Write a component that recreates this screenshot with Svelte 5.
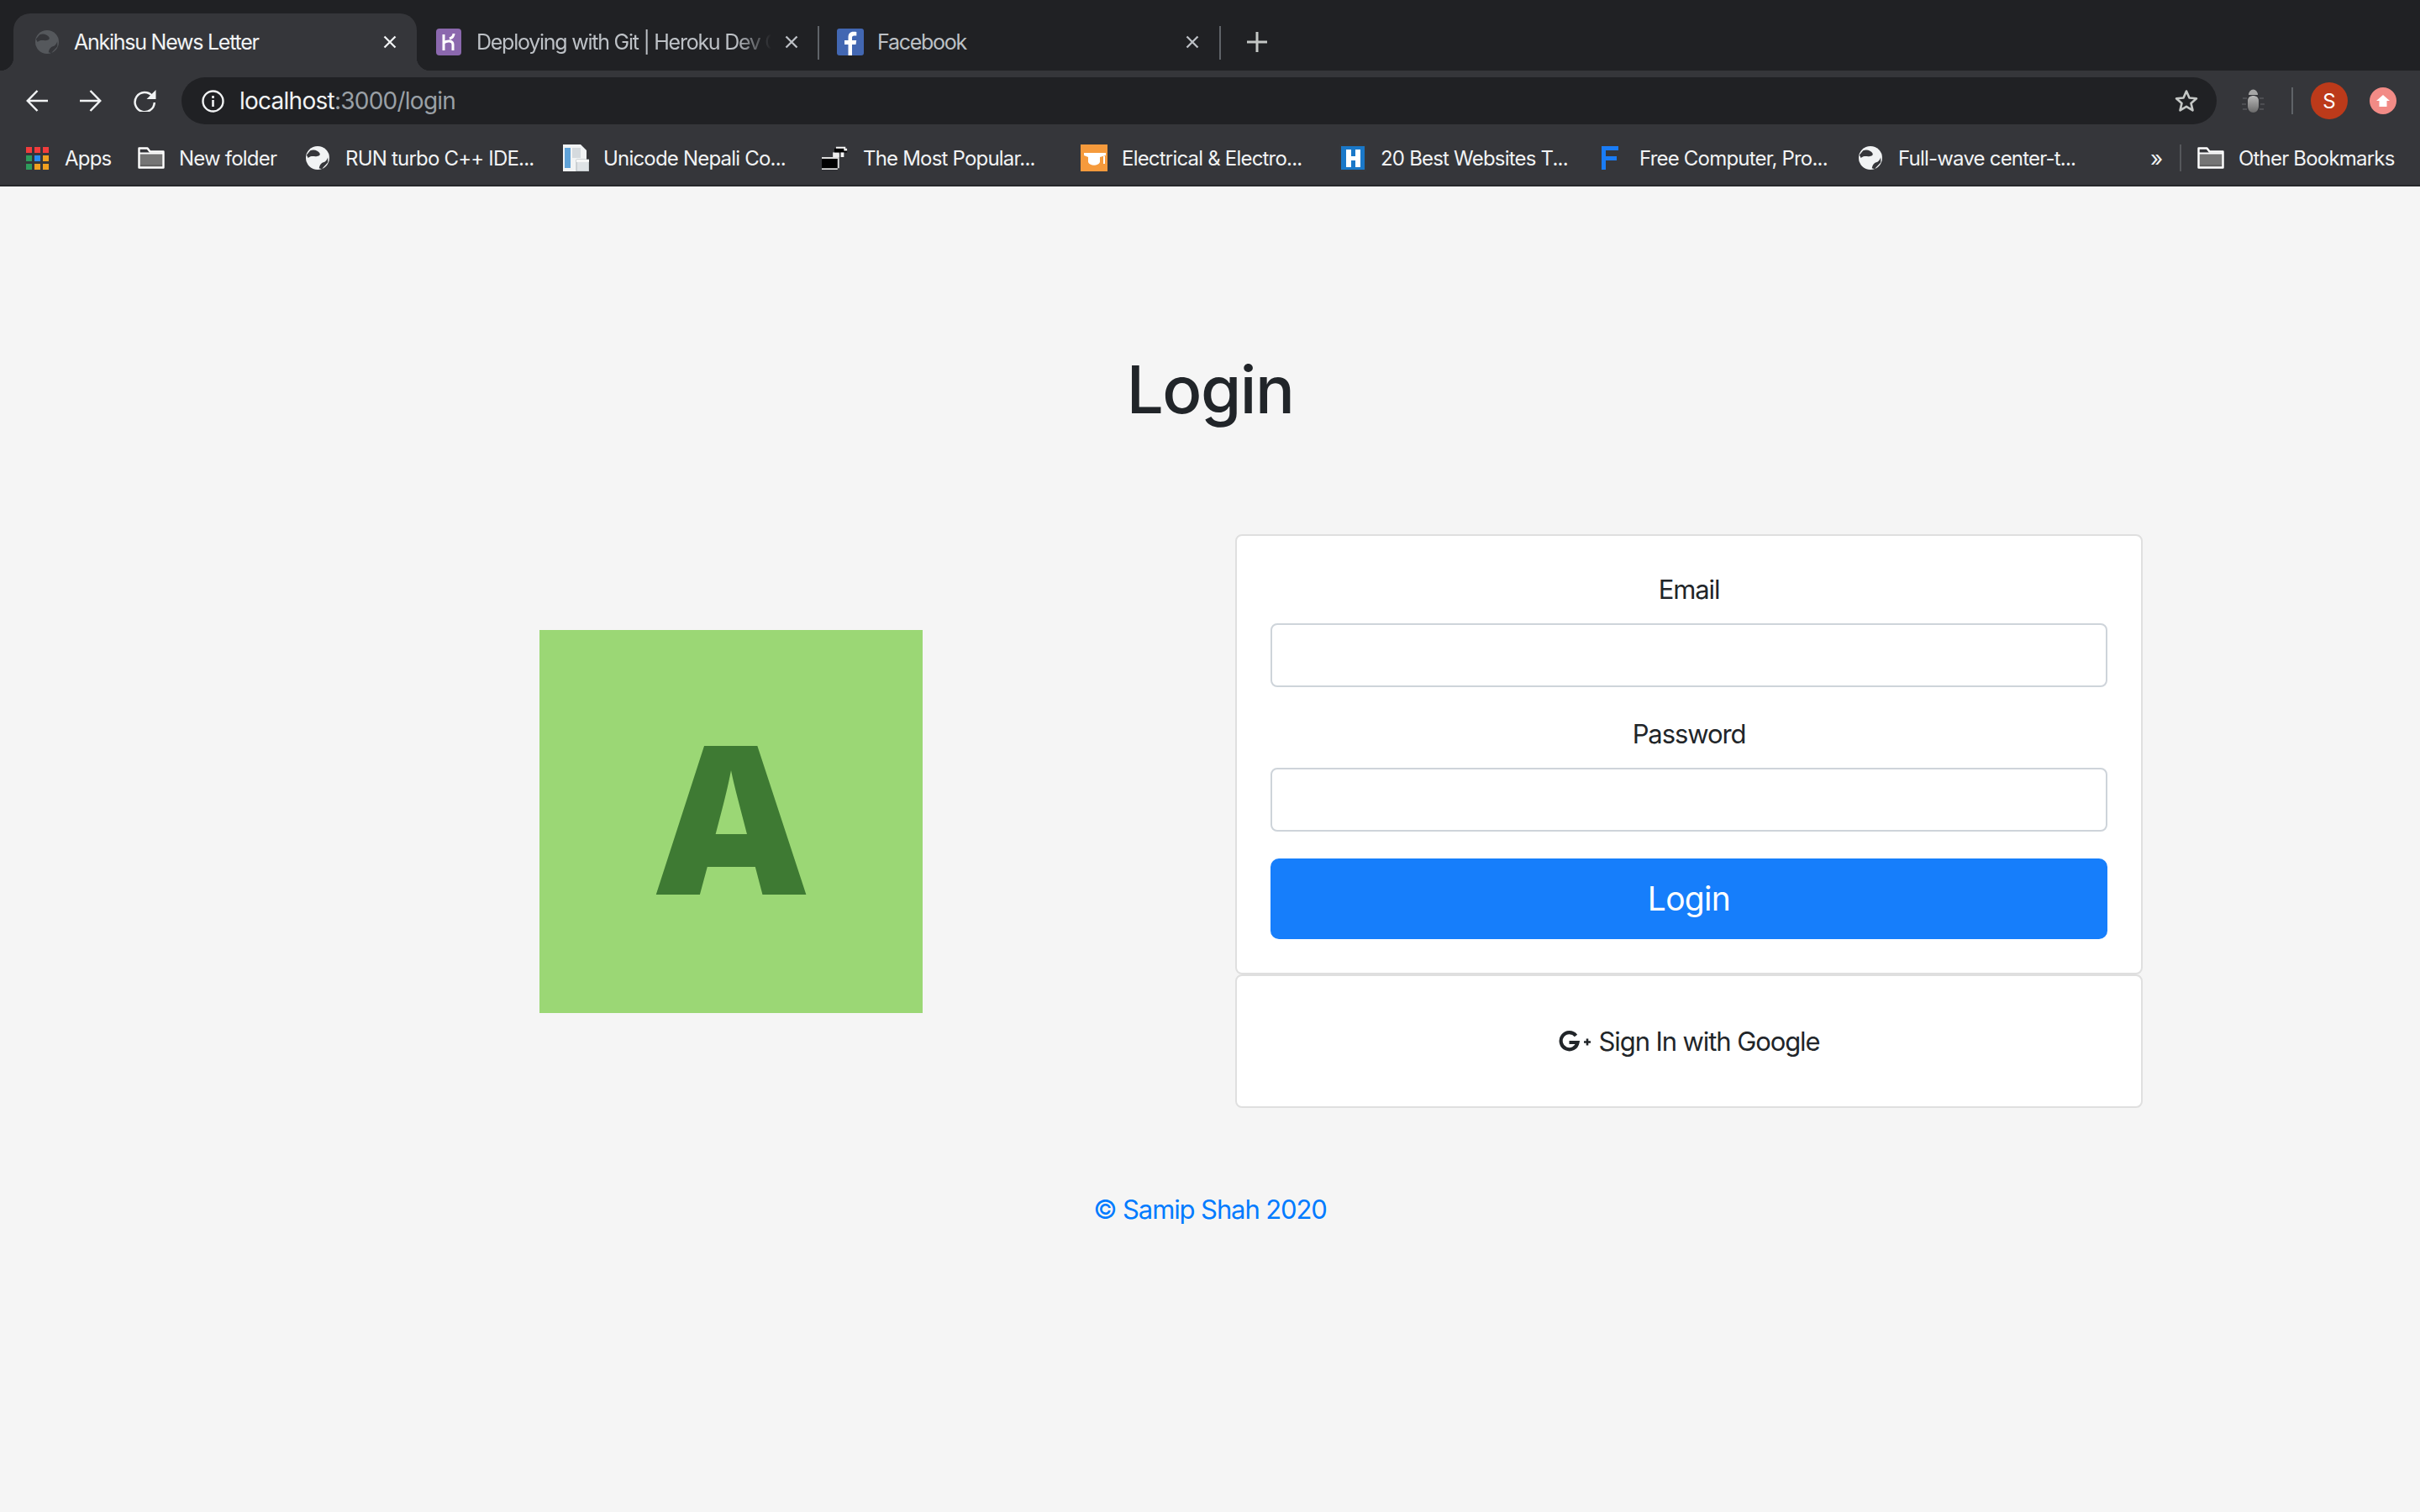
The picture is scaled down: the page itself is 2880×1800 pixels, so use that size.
<script>
  const bookmarks = [
    { label: "Apps", icon: "apps", w: 136 },
    { label: "New folder", icon: "folder", w: 198 },
    { label: "RUN turbo C++ IDE...", icon: "globe", w: 307 },
    { label: "Unicode Nepali Co...", icon: "doc", w: 309 },
    { label: "The Most Popular...", icon: "stairs", w: 308 },
    { label: "Electrical & Electro...", icon: "cap", w: 308 },
    { label: "20 Best Websites T...", icon: "h", w: 308 },
    { label: "Free Computer, Pro...", icon: "f", w: 308 },
    { label: "Full-wave center-t...", icon: "globe", w: 340 }
  ];
  const appColors = ["#f23c3c", "#f23c3c", "#f23c3c", "#2e9c5c", "#2a8cf0", "#f0a020", "#2e9c5c", "#f0a020", "#f0a020"];
</script>

{#snippet globe(size, fg, bg)}
  <svg width={size} height={size} viewBox="0 0 32 32">
    <circle cx="16" cy="16" r="16" fill={bg} />
    <path d="M6 6C11 4 17 6 19 10 20 13 16 14 13 14 10 14 7 13 3 16L1 12Z" fill={fg} />
    <path d="M30 15C29 18 27 21 24 22 21 23 19 25 18 30L22 31C24 28 27 26 30 22Z" fill={fg} />
  </svg>
{/snippet}

{#snippet folder()}
  <svg width="32" height="26" viewBox="0 0 32 26">
    <path d="M2 7h28v17H2Z" fill="#757575" />
    <path d="M2 21h28v3H2Z" fill="#636363" />
    <path d="M1.500 1.500h10l3 4h16v19h-29Z" fill="none" stroke="#fff" stroke-width="2.400" stroke-linejoin="round" />
    <path d="M2 7.500h28" stroke="#fff" stroke-width="2" />
  </svg>
{/snippet}

{#snippet closeIcon(color)}
  <svg class="close" width="16" height="16" viewBox="0 0 16 16">
    <path d="M1.500 1.500l13 13M14.500 1.500l-13 13" stroke={color} stroke-width="2.300" />
  </svg>
{/snippet}

<div class="browser">
  <div class="tabstrip">
    <div class="tab active">
      {@render globe(28, "#35363a", "#55585c")}
      <span class="tab-title">Ankihsu News Letter</span>
      {@render closeIcon("#f1f3f4")}
    </div>
    <div class="tab second">
      <svg width="30" height="32" viewBox="0 0 30 32">
        <rect width="30" height="32" rx="4" fill="#8b68ae" />
        <path d="M9 7v19M9 17c4-3 11-3 11 2v7M21 6c0 3-2 5-5 6" fill="none" stroke="#fff" stroke-width="3" />
      </svg>
      <span class="tab-title fade">Deploying with Git | Heroku Dev Center</span>
      {@render closeIcon("#bdc1c6")}
    </div>
    <i class="tab-sep"></i>
    <div class="tab third">
      <svg width="32" height="32" viewBox="0 0 32 32">
        <rect width="32" height="32" rx="3" fill="#4267b2" />
        <path d="M18 32V19h4.500l.7-5H18v-3c0-1.500.6-2.500 2.600-2.500h2.700V4c-1-.1-2.300-.2-3.700-.2-3.800 0-6.100 2.300-6.100 6.500V14H9v5h4.500v13Z" fill="#fff" />
      </svg>
      <span class="tab-title">Facebook</span>
      {@render closeIcon("#bdc1c6")}
    </div>
    <i class="tab-sep"></i>
    <svg class="newtab" width="24" height="24" viewBox="0 0 24 24">
      <path d="M12 0v24M0 12h24" stroke="#c4c7c5" stroke-width="3" />
    </svg>
  </div>

  <div class="toolbar">
    <div class="nav-group">
      <svg width="26" height="26" viewBox="0 0 26 26" fill="none" stroke="#f1f3f4" stroke-width="2.500">
        <path d="M26 13H2M13.500 1 1.800 13l11.700 12" />
      </svg>
      <svg width="26" height="26" viewBox="0 0 26 26" fill="none" stroke="#f1f3f4" stroke-width="2.500">
        <path d="M0 13h24M12.500 1l11.700 12-11.700 12" />
      </svg>
      <svg width="27" height="26" viewBox="0 0 27 26" fill="none" stroke="#f1f3f4" stroke-width="2.500">
        <path d="M22 7A11.600 11.600 0 1 0 24.800 15" />
        <path d="M26.500 0v11h-11Z" fill="#f1f3f4" stroke="none" />
      </svg>
    </div>
    <div class="omnibox">
      <svg width="27" height="27" viewBox="0 0 27 27">
        <circle cx="13.500" cy="13.500" r="12" fill="none" stroke="#f1f3f4" stroke-width="2.400" />
        <path d="M13.500 12v8M13.500 7v3" stroke="#f1f3f4" stroke-width="2.600" />
      </svg>
      <span class="url">localhost<span class="url-rest">:3000/login</span></span>
      <svg width="30" height="30" viewBox="0 0 30 30">
        <path d="M15 3.500l3.500 8 8.500.8-6.500 5.600 2 8.500L15 21.900l-7.500 4.500 2-8.500L3 12.300l8.500-.8Z" fill="none" stroke="#c4c7c5" stroke-width="2.600" stroke-linejoin="round" />
      </svg>
    </div>
    <svg class="bug" width="27" height="28" viewBox="0 0 27 28">
      <defs>
        <linearGradient id="bug-body" x1="0" x2="0" y1="0" y2="1">
          <stop offset="0" stop-color="#b8b8b8" />
          <stop offset="1" stop-color="#6a6a6a" />
        </linearGradient>
      </defs>
      <path d="M1 11h5M0 18h5M1 24h5M26 11h-5M27 18h-5M26 24h-5" stroke="#55575b" stroke-width="1.500" />
      <path d="M8 7a5.500 6.500 0 0 1 11 0Z" fill="#a6a6a6" />
      <path d="M7 14c0-4 3-6 6.500-6s6.500 2 6.500 6v6c0 5-3 8-6.500 8S7 25 7 20Z" fill="url(#bug-body)" />
    </svg>
    <i class="bar-sep"></i>
    <span class="avatar">S</span>
    <span class="update">
      <svg width="16" height="14" viewBox="0 0 16 14">
        <path d="M8 0l8 7h-3.500v7h-9V7H0Z" fill="#fff" />
      </svg>
    </span>
  </div>

  <div class="bookmarks">
    {#each bookmarks as b}
      <div class="bookmark" style="width:{b.w}px">
        <span class="bm-icon">
          {#if b.icon === "apps"}
            <span class="apps">
              {#each appColors as c}
                <i style="background:{c}"></i>
              {/each}
            </span>
          {:else if b.icon === "folder"}
            {@render folder()}
          {:else if b.icon === "globe"}
            {@render globe(28, "#35363a", "#f1f3f4")}
          {:else if b.icon === "doc"}
            <svg width="32" height="32" viewBox="0 0 32 32">
              <path d="M1 0h21l7 7v25H1Z" fill="#f1f3f4" />
              <path d="M3 4h7v24H3Z" fill="#5fa2d8" />
              <path d="M12 4h10v12H12Z" fill="#d5dade" />
              <path d="M17 18h15v14H17Z" fill="#dfe3e6" stroke="#aeb4b9" stroke-width="1" />
              <path d="M17 18h15v3H17Z" fill="#f7f7f7" />
            </svg>
          {:else if b.icon === "stairs"}
            <svg width="34" height="30" viewBox="0 0 34 30">
              <path d="M0 16h20v14H0Z" fill="#000" />
              <path d="M0 14h20v2H0ZM0 28h20v2H0ZM20 10h2v18h-2Z" fill="#ddd" />
              <path d="M14 8h8v6h-8Z" fill="#ededed" />
              <path d="M16 3h16v5H16Z" fill="#000" />
              <path d="M18 1h12v2H18ZM28 3h4v3h-4ZM24 8h4v6h-4Z" fill="#f5f5f5" />
            </svg>
          {:else if b.icon === "cap"}
            <svg width="32" height="32" viewBox="0 0 32 32">
              <rect width="32" height="32" fill="#f59a3c" />
              <path d="M4 10h26v3l-7 2v6c-2 5-12 5-14 0v-6l-5-2Z" fill="#fff" />
              <path d="M27 14h2v9h-2Z" fill="#fff" />
            </svg>
          {:else if b.icon === "h"}
            <svg width="32" height="32" viewBox="0 0 32 32">
              <rect width="32" height="32" fill="#36383c" />
              <rect x="2" y="2" width="28" height="28" fill="#1a78c8" />
              <path d="M8 6h6v8h5V6h6v21h-6v-8h-5v8H8Z" fill="#fff" />
            </svg>
          {:else if b.icon === "f"}
            <svg class="f-icon" width="20" height="28" viewBox="0 0 20 28">
              <path d="M0 0h20v5H5v7h13v5H5v11H0Z" fill="#1a7cf5" />
            </svg>
          {/if}
        </span>
        <span class="bm-label">{b.label}</span>
      </div>
    {/each}
    <span class="more">»</span>
    <i class="bm-sep"></i>
    <div class="bookmark">
      <span class="bm-icon">{@render folder()}</span>
      <span class="bm-label">Other Bookmarks</span>
    </div>
  </div>
</div>

<main class="page">
  <h1>Login</h1>
  <div class="row">
    <div class="col logo-col">
      <div class="logo">A</div>
    </div>
    <div class="col">
      <form class="card" onsubmit={(e) => e.preventDefault()}>
        <div class="form-group">
          <label for="email">Email</label>
          <input id="email" type="email" />
        </div>
        <div class="form-group">
          <label for="password">Password</label>
          <input id="password" type="password" />
        </div>
        <button type="submit">Login</button>
      </form>
      <div class="card google">
        <a href="#google">
          <svg width="39" height="26" viewBox="0 0 39 26">
            <path d="M20.500 6A10 10 0 1 0 22.500 14H12.500" fill="none" stroke="#212529" stroke-width="4.200" />
            <path d="M34 9.500v8M30 13.500h8" stroke="#212529" stroke-width="2.600" />
          </svg>
          <span>Sign In with Google</span>
        </a>
      </div>
    </div>
  </div>
  <p class="footer">© Samip Shah 2020</p>
</main>

<style>
:global(body) {
  margin: 0;
  background: #f5f5f5;
  font-family: Inter, "Liberation Sans", sans-serif;
  color: #212529;
}

.browser {
  height: 222px;
  background: #35363a;
  border-bottom: 2px solid #26272a;
  box-sizing: border-box;
}

.tabstrip {
  height: 84px;
  background: #202124;
  display: flex;
  align-items: flex-end;
  padding-left: 16px;
  box-sizing: border-box;
  overflow: hidden;
}

.tab {
  width: 477px;
  height: 68px;
  display: flex;
  align-items: center;
  box-sizing: border-box;
  padding: 0 23px;
  color: #bdc1c6;
  font-size: 25px;
  letter-spacing: -1.25px;
  flex-shrink: 0;
}

.tab svg {
  flex-shrink: 0;
}

.tab.active {
  position: relative;
  width: 480px;
  padding: 0 24px 0 26px;
  background: #35363a;
  border-radius: 20px 20px 0 0;
  color: #f1f3f4;
}

.tab.active::before,
.tab.active::after {
  content: "";
  position: absolute;
  bottom: 0;
  width: 16px;
  height: 16px;
}

.tab.active::before {
  left: -16px;
  background: radial-gradient(circle at 0 0, transparent 16px, #35363a 16.5px);
}

.tab.active::after {
  right: -16px;
  background: radial-gradient(circle at 100% 0, transparent 16px, #35363a 16.5px);
}

.tab.third {
  width: 476px;
  padding-left: 21px;
  padding-right: 24px;
}

.tab-title {
  margin-left: 18px;
  flex: 1;
  min-width: 0;
  white-space: nowrap;
  overflow: hidden;
}

.tab.third .tab-title {
  margin-left: 16px;
}

.tab-title.fade {
  -webkit-mask-image: linear-gradient(to right, #000 88%, transparent 100%);
  mask-image: linear-gradient(to right, #000 88%, transparent 100%);
}

.close {
  margin-left: 16px;
}

.tab-sep {
  width: 2px;
  height: 40px;
  background: #5f6368;
  margin-bottom: 13px;
  flex-shrink: 0;
}

.newtab {
  margin: 0 0 22px 31px;
  flex-shrink: 0;
}

.toolbar {
  height: 72px;
  display: flex;
  align-items: center;
  padding-left: 31px;
  box-sizing: border-box;
}

.nav-group {
  display: flex;
  gap: 38px;
  margin-right: 30px;
}

.omnibox {
  width: 2422px;
  height: 56px;
  background: #202124;
  border-radius: 28px;
  display: flex;
  align-items: center;
  padding: 0 21px 0 24px;
  box-sizing: border-box;
}

.url {
  flex: 1;
  margin-left: 18px;
  font-size: 28px;
  color: #f1f3f4;
  letter-spacing: -0.75px;
}

.url-rest {
  color: #9aa0a6;
}

.bug {
  margin-left: 30px;
}

.bar-sep {
  width: 2px;
  height: 32px;
  background: #5f6368;
  margin: 0 21px 0 32px;
}

.avatar {
  width: 44px;
  height: 44px;
  border-radius: 50%;
  background: #bc3a1a;
  color: #fff;
  font-size: 24px;
  display: flex;
  align-items: center;
  justify-content: center;
}

.update {
  width: 32px;
  height: 32px;
  margin-left: 26px;
  border-radius: 50%;
  background: #f28b86;
  display: flex;
  align-items: center;
  justify-content: center;
}

.bookmarks {
  height: 64px;
  display: flex;
  align-items: center;
  padding-left: 28px;
  box-sizing: border-box;
  font-size: 24px;
  color: #f1f3f4;
  letter-spacing: -0.8px;
}

.bookmark {
  display: flex;
  align-items: center;
  flex-shrink: 0;
}

.bm-icon {
  width: 32px;
  display: flex;
  justify-content: center;
  margin-right: 17px;
}

.bm-label {
  white-space: nowrap;
}

.f-icon {
  margin-right: 4px;
}

.apps {
  display: grid;
  grid-template-columns: repeat(3, 7px);
  gap: 3px;
}

.apps i {
  width: 7px;
  height: 7px;
}

.more {
  font-size: 26px;
  width: 14px;
  text-align: center;
  margin-left: 9px;
}

.bm-sep {
  width: 2px;
  height: 32px;
  background: #55575b;
  margin: 0 19px 0 21px;
}

.page {
  width: 2280px;
  margin: 0 auto;
  padding-top: 194px;
}

h1 {
  margin: 0 0 124px;
  font-size: 78px;
  line-height: 96px;
  font-weight: 500;
  text-align: center;
  letter-spacing: -1.5px;
}

.row {
  display: flex;
}

.col {
  width: 50%;
  box-sizing: border-box;
  padding: 0 30px;
}

.logo-col {
  display: flex;
  align-items: center;
  justify-content: center;
}

.logo {
  width: 456px;
  height: 456px;
  box-sizing: border-box;
  padding-bottom: 17px;
  background: #9bd775;
  color: #3e7a33;
  font-family: "Open Sans", sans-serif;
  font-weight: 800;
  font-size: 246px;
  display: flex;
  align-items: center;
  justify-content: center;
}

.card {
  background: #fff;
  border: 2px solid #dfdfdf;
  border-radius: 8px;
  padding: 40px;
  text-align: center;
  font-size: 31px;
  line-height: 48px;
  letter-spacing: -1.1px;
}

.form-group {
  margin-bottom: 32px;
}

label {
  display: block;
  margin-bottom: 16px;
}

input {
  display: block;
  width: 100%;
  height: 76px;
  box-sizing: border-box;
  background: #fff;
  border: 2px solid #ced4da;
  border-radius: 8px;
}

button {
  display: block;
  width: 100%;
  height: 96px;
  border: 0;
  border-radius: 10px;
  background: #167efb;
  color: #fff;
  font: inherit;
  font-size: 39px;
  letter-spacing: -0.7px;
  line-height: 60px;
}

.google {
  height: 159px;
  box-sizing: border-box;
  padding: 54px 40px 0;
}

.google a {
  display: inline-flex;
  align-items: center;
  gap: 9px;
  color: #212529;
  text-decoration: none;
}

.footer {
  margin: 97px 0 0;
  text-align: center;
  font-size: 31px;
  line-height: 48px;
  color: #007bff;
  letter-spacing: -1.1px;
}
</style>
